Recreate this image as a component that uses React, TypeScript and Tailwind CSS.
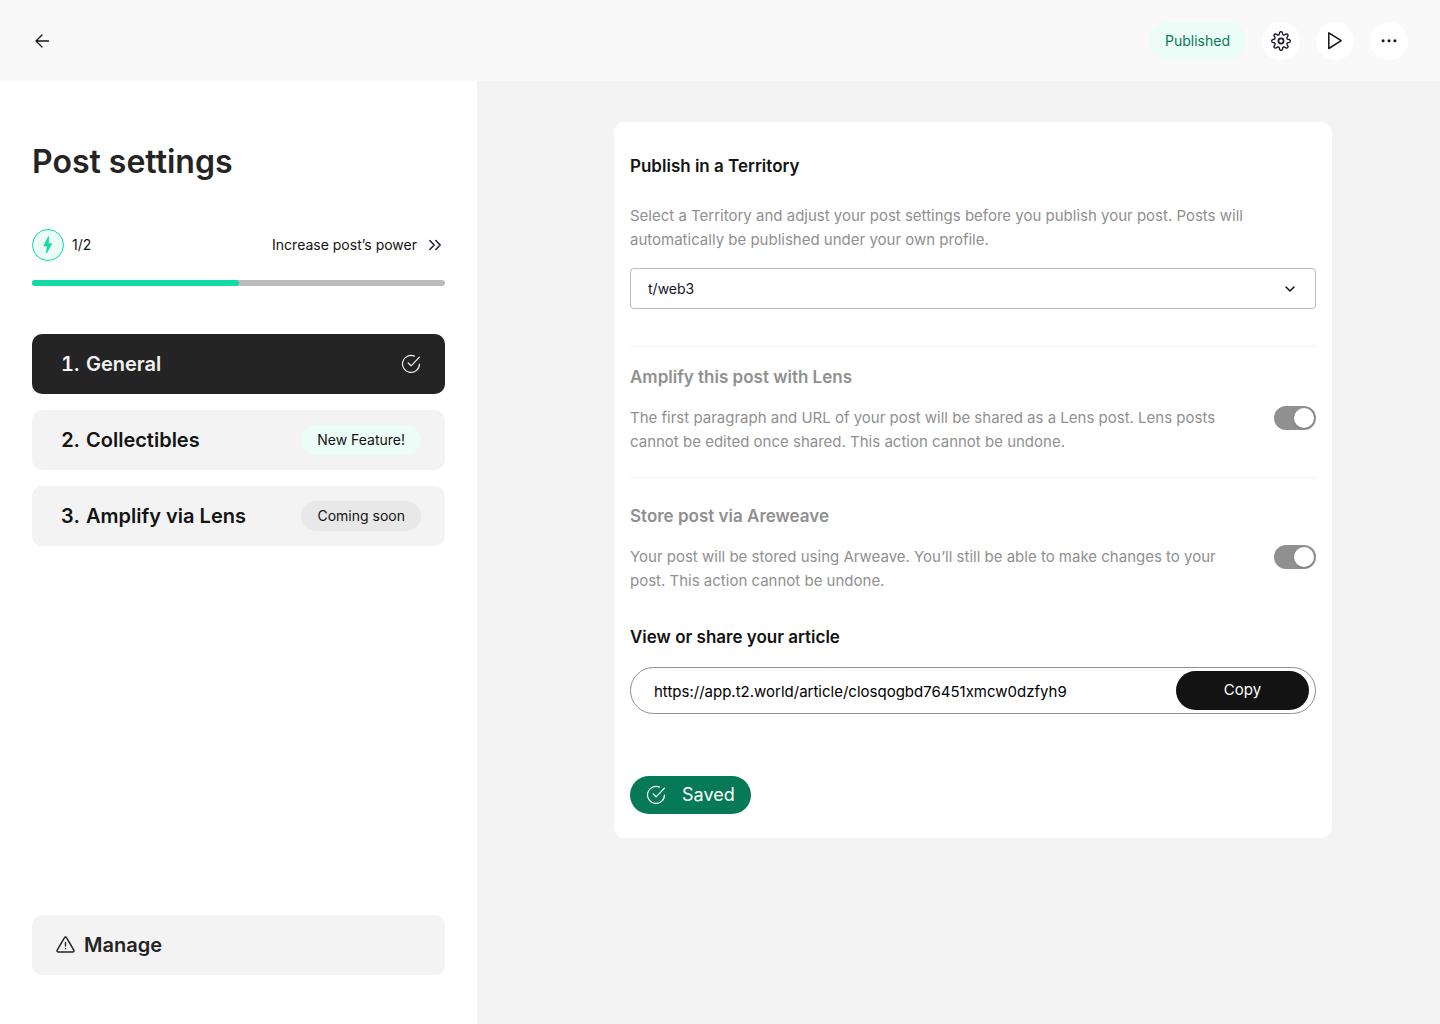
import type { ReactNode } from "react";

const sans = "font-[Inter,'Liberation_Sans',sans-serif]";

const ArrowLeftIcon = () => (
  <svg className="w-5 h-5" fill="none" stroke="currentColor" viewBox="0 0 20 20">
    <path strokeLinecap="round" strokeLinejoin="round" strokeWidth={1.3} d="M16.5 10H4M10 4L4 10l6 6" />
  </svg>
);

// Eight rounded teeth around the centre of a 24px box
const gearPoints = Array.from({ length: 144 }, (_, i) => {
  const angle = (i / 144) * Math.PI * 2;
  const radius = 7.9 + 1.5 * Math.tanh(1.6 * Math.cos(angle * 8));
  return `${(12 + radius * Math.cos(angle)).toFixed(2)},${(12 + radius * Math.sin(angle)).toFixed(2)}`;
}).join(" ");

const GearIcon = () => (
  <svg className="w-6 h-6" fill="none" stroke="#1a1a2b" viewBox="0 0 24 24">
    <polygon points={gearPoints} strokeLinejoin="round" strokeWidth={1.4} />
    <circle cx="12" cy="12" r="2.6" strokeWidth={1.7} />
  </svg>
);

const PlayIcon = () => (
  <svg className="w-6 h-6" fill="none" stroke="currentColor" viewBox="0 0 24 24">
    <path strokeLinejoin="round" strokeWidth={1.5} d="M5.8 3.900v15.600L18.200 11.700z" />
  </svg>
);

const DotsIcon = () => (
  <svg className="w-6 h-6" fill="currentColor" viewBox="0 0 24 24">
    <circle cx="6.1" cy="11.7" r="1.5" />
    <circle cx="12" cy="11.7" r="1.5" />
    <circle cx="17.9" cy="11.7" r="1.5" />
  </svg>
);

const CheckCircleIcon = () => (
  <svg className="w-5 h-5" fill="none" stroke="currentColor" viewBox="0 0 20 20">
    <path strokeLinecap="round" strokeWidth={1.2} d="M13.4 2.1A8.5 8.5 0 1018.5 10" />
    <path strokeLinecap="round" strokeLinejoin="round" strokeWidth={1.2} d="M7.2 9l2.9 2.8L18.4 3.2" />
  </svg>
);

const BoltIcon = () => (
  <svg className="w-5 h-5" fill="#0fdba2" stroke="#0fdba2" viewBox="0 0 20 20">
    <path strokeLinejoin="round" strokeWidth={0.8} d="M10.6 1.6L5.700 10.900h3.600l-.8 7.200 5.300-9.300h-3.600z" />
  </svg>
);

const ChevronsIcon = () => (
  <svg className="w-5 h-5" fill="none" stroke="#15152a" viewBox="0 0 20 20">
    <path strokeLinecap="round" strokeLinejoin="round" strokeWidth={1.4} d="M4.8 5.5L9.2 10l-4.4 4.5M10.8 5.5l4.4 4.5-4.4 4.5" />
  </svg>
);

const ChevronDownIcon = () => (
  <svg className="w-5 h-5" fill="none" stroke="currentColor" viewBox="0 0 20 20">
    <path strokeLinecap="round" strokeLinejoin="round" strokeWidth={1.5} d="M6 8l4 4 4-4" />
  </svg>
);

const WarningIcon = () => (
  <svg className="w-5 h-5" fill="none" stroke="currentColor" viewBox="0 0 20 20">
    <path strokeLinejoin="round" strokeWidth={1.5} d="M8.5 2.6L1.2 15.2c-.5.9.1 1.900 1.100 1.900h14.400c1 0 1.600-1 1.100-1.900L10.500 2.600c-.4-.8-1.600-.8-2 0z" />
    <path strokeLinecap="round" strokeWidth={1.4} d="M9.500 7.500v3.600M9.500 13.700v.1" />
  </svg>
);

const IconButton = ({ label, children }: { label: string; children: ReactNode }) => (
  <button aria-label={label} className="w-[38px] h-[38px] rounded-full bg-white flex items-center justify-center">
    {children}
  </button>
);

const steps = [
  { title: "General", active: true },
  { title: "Collectibles", badge: "New Feature!", badgeClass: "bg-[#ebfdf6]" },
  { title: "Amplify via Lens", badge: "Coming soon", badgeClass: "bg-[#e8e8e8]" },
];

const ToggleRow = ({ id, title, description }: { id: string; title: string; description: string }) => (
  <div>
    <h2 className="font-semibold text-[17px] leading-7 text-[#909090]">
      <label htmlFor={id}>{title}</label>
    </h2>
    <div className="mt-[15px] flex items-start justify-between gap-8">
      <p className="max-w-[612px] text-[15px] leading-6 text-[#909090]">{description}</p>
      <input
        id={id}
        type="checkbox"
        role="switch"
        defaultChecked
        className="appearance-none shrink-0 w-[42px] h-6 p-0.5 rounded-full bg-[#909090] flex justify-start checked:justify-end before:block before:size-5 before:rounded-full before:bg-white before:shadow-sm"
      />
    </div>
  </div>
);

export default function App() {
  return (
    <div className={`${sans} min-h-screen flex flex-col bg-[#f3f3f3] text-[#131313]`}>
      {/* Top bar */}
      <header className="h-[81px] shrink-0 px-8 flex items-center justify-between bg-[#f9f9f9]">
        <button aria-label="Back">
          <ArrowLeftIcon />
        </button>
        <div className="flex items-center gap-4">
          <span className="h-[38px] px-4 rounded-full bg-[#ebfdf6] text-[#067a57] text-sm flex items-center">Published</span>
          <IconButton label="Settings"><GearIcon /></IconButton>
          <IconButton label="Preview"><PlayIcon /></IconButton>
          <IconButton label="More"><DotsIcon /></IconButton>
        </div>
      </header>

      <div className="flex-1 flex">
        {/* Sidebar */}
        <aside className="w-[477px] shrink-0 bg-white px-8 pt-[61px] pb-[49px] flex flex-col">
          <h1 className="font-semibold text-[32px] leading-10 text-[#242424]">Post settings</h1>

          <div className="mt-[47px] flex items-center justify-between text-sm">
            <div className="flex items-center gap-2">
              <span className="w-8 h-8 rounded-full border border-[#0fdba2] bg-[#ebfdf6] flex items-center justify-center">
                <BoltIcon />
              </span>
              <span>1/2</span>
            </div>
            <a href="#power" className="flex items-center gap-2">
              Increase post’s power
              <ChevronsIcon />
            </a>
          </div>
          <div className="mt-[19px] h-1.5 rounded-full bg-[#bcbcbc]">
            <div className="w-1/2 h-full rounded-full bg-[#0fdba2]" />
          </div>

          <nav className="mt-12 flex flex-col gap-4">
            {steps.map((step, index) => (
              <button
                key={step.title}
                className={`h-[60px] pl-[29px] pr-6 rounded-[10px] flex items-center justify-between ${
                  step.active ? "bg-[#242424] text-[#f3f3f3]" : "bg-[#f3f3f3]"
                }`}
              >
                <span className="font-semibold text-xl flex">
                  <span className="w-[25px] text-left tabular-nums">{index + 1}.</span>
                  {step.title}
                </span>
                {step.active && <CheckCircleIcon />}
                {step.badge && (
                  <span className={`h-[30px] px-4 rounded-full text-sm flex items-center ${step.badgeClass}`}>{step.badge}</span>
                )}
              </button>
            ))}
          </nav>

          <button className="mt-auto h-[60px] px-6 rounded-[10px] bg-[#f3f3f3] text-[#242424] font-semibold text-xl flex items-center gap-2">
            <WarningIcon />
            Manage
          </button>
        </aside>

        {/* Settings card */}
        <main className="flex-1 pt-[41px] pl-[137px] pr-[108px]">
          <section className="bg-white rounded-[10px] px-4 pt-[30px] pb-6">
            <h2 className="font-semibold text-[17px] leading-7">
              <label htmlFor="territory">Publish in a Territory</label>
            </h2>
            <p className="mt-6 max-w-[650px] text-[15px] leading-6 text-[#909090]">
              Select a Territory and adjust your post settings before you publish your post. Posts will automatically be
              published under your own profile.
            </p>
            <div className="relative mt-4">
              <select
                id="territory"
                className="appearance-none block w-full h-[41px] px-[17px] rounded border border-[#bcbcbc] bg-white text-sm text-[#15152a]"
              >
                <option>t/web3</option>
              </select>
              <span className="absolute right-4 inset-y-0 flex items-center pointer-events-none">
                <ChevronDownIcon />
              </span>
            </div>

            <hr className="mt-[37px] mb-4 border-[#f3f3f3]" />
            <ToggleRow
              id="lens"
              title="Amplify this post with Lens"
              description="The first paragraph and URL of your post will be shared as a Lens post. Lens posts cannot be edited once shared. This action cannot be undone."
            />
            <hr className="mt-[23px] mb-6 border-[#f3f3f3]" />
            <ToggleRow
              id="arweave"
              title="Store post via Areweave"
              description="Your post will be stored using Arweave. You’ll still be able to make changes to your post. This action cannot be undone."
            />

            <h2 className="mt-[30px] font-semibold text-[17px] leading-7">
              <label htmlFor="share">View or share your article</label>
            </h2>
            <div className="mt-4 h-[47px] pl-[23px] pr-1.5 pt-[3px] rounded-full border border-[#909090] flex items-start">
              <input
                id="share"
                readOnly
                defaultValue="https://app.t2.world/article/closqogbd76451xmcw0dzfyh9"
                className="flex-1 min-w-0 h-10 text-[15px] text-black outline-none"
              />
              <button className="w-[133px] h-[39px] rounded-full bg-[#131313] text-white text-[15px]">Copy</button>
            </div>

            <button className="mt-[62px] h-[38px] px-4 rounded-full bg-[#067a57] text-white text-lg flex items-center gap-4">
              <CheckCircleIcon />
              Saved
            </button>
          </section>
        </main>
      </div>
    </div>
  );
}
